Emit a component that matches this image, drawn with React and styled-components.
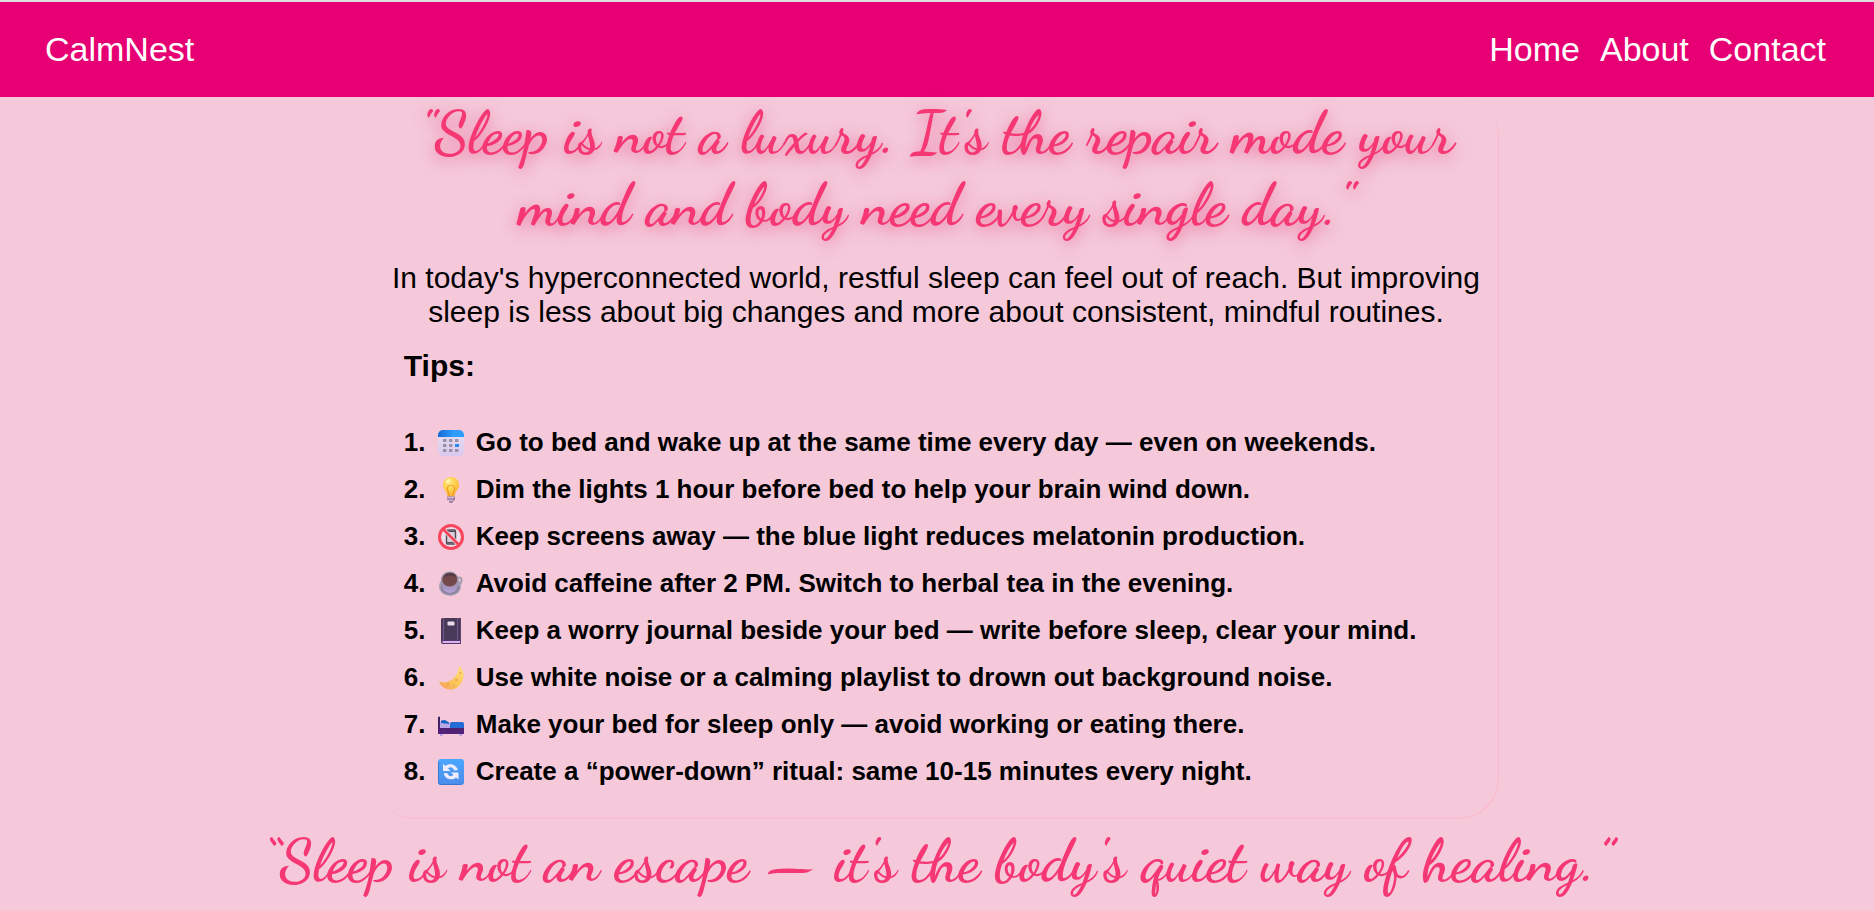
import React from "react";
import styled, { createGlobalStyle } from "styled-components";

const GlobalStyle = createGlobalStyle`
  *, *::before, *::after { box-sizing: border-box; }
  body {
    margin: 0;
    background: #f5c9da;
    color: #000;
    font-family: Arial, "Liberation Sans", sans-serif;
    overflow-x: hidden;
  }
`;

const Header = styled.header`
  display: flex;
  align-items: center;
  justify-content: space-between;
  min-height: 97px;
  padding: 0 48px 2px 45px;
  border-top: 2px solid #dedede;
  background: #e60073;
`;

const NavLink = styled.a`
  color: #fff;
  font-size: 34px;
  line-height: 40px;
  text-decoration: none;
`;

const Nav = styled.nav`
  display: flex;
  gap: 20px;
`;

const Main = styled.main`
  display: flex;
  flex-direction: column;
  align-items: center;
  gap: 6px;
`;

const Card = styled.section`
  width: 60%;
  padding: 0 17px 24px 15px;
  border-radius: 40px;
  box-shadow: inset -1px -1px 1px #fabacd;
`;

const Quote = styled.h1`
  margin: 0;
  color: #f53874;
  font-family: "Dancing Script", "Liberation Serif", cursive;
  font-size: 60px;
  font-weight: 700;
  line-height: 72px;
  text-align: center;
  text-shadow: ${(p) => (p.$glow ? "0 4px 15px rgba(232, 30, 100, 0.5)" : "none")};
`;

const Intro = styled.p`
  margin: 20px 0;
  font-size: 30px;
  line-height: 34px;
  text-align: center;
`;

const TipsTitle = styled.h2`
  margin: 0 0 36px;
  padding-left: 14px;
  font-size: 30px;
  line-height: 34px;
`;

const TipList = styled.ol`
  margin: 0;
  padding: 0 0 0 14px;
  list-style: none;
`;

const Tip = styled.li`
  display: flex;
  align-items: center;
  font-size: 26px;
  font-weight: 700;
  line-height: 47px;
`;

const TipNumber = styled.span`
  width: 34px;
`;

const TipIcon = styled.svg`
  flex: none;
  width: 26px;
  height: 26px;
  margin-right: 12px;
`;

const Calendar = () => (
  <TipIcon viewBox="0 0 26 26" aria-hidden="true">
    <defs>
      <linearGradient id="calTop"><stop stopColor="#1769d2" /><stop offset=".6" stopColor="#2f9dff" /></linearGradient>
      <linearGradient id="calBody" x2="0" y2="1"><stop stopColor="#e6e0f0" /><stop offset="1" stopColor="#dac9ef" /></linearGradient>
    </defs>
    <rect width="26" height="26" rx="5" fill="url(#calBody)" />
    <path d="M0 7V5a5 5 0 0 1 5-5h16a5 5 0 0 1 5 5v2z" fill="url(#calTop)" />
    <path
      d="M5 9h3.400v3H5zM11 9h3.400v3H11zM17 9h3.400v3H17zM5 14h3.400v3H5zM11 14h3.400v3H11zM5 19h3.400v3H5zM11 19h3.400v3H11zM17 19h3.400v3H17z"
      fill="#9b91a6"
    />
    <path d="M17 14h4v3h-4z" fill="#2a8cf0" />
  </TipIcon>
);

const Bulb = () => (
  <TipIcon viewBox="0 0 26 26" aria-hidden="true">
    <defs>
      <radialGradient id="bulb" cx=".4" cy=".3" r=".75"><stop stopColor="#ffe98a" /><stop offset=".5" stopColor="#ffd149" /><stop offset="1" stopColor="#f8a83c" /></radialGradient>
    </defs>
    <path d="M5 8a8 8 0 0 1 16 0c0 5-4 6-4.500 11.500h-7C9 14 5 13 5 8z" fill="url(#bulb)" />
    <path d="M11.500 19l-1.500-5c-2-4 1-6 3-6s5 2 3 6l-1.500 5" fill="none" stroke="#ef9b25" strokeWidth="1.200" />
    <ellipse cx="10" cy="4" rx="2.500" ry="1.500" fill="#fff3b5" transform="rotate(-35 10 4)" />
    <path d="M9 19.500h8v3l-1.500 1.500-1.500 2h-2l-1.500-2L9 22.500z" fill="#9a789f" />
    <path d="M9 21l7-.500M10 23.500l5-.500" stroke="#dfcfe6" strokeWidth="1" />
  </TipIcon>
);

const NoPhone = () => (
  <TipIcon viewBox="0 0 26 26" aria-hidden="true">
    <circle cx="13" cy="13" r="11.500" fill="#f0deea" />
    <rect x="8.500" y="6" width="9" height="14" rx="1" fill="#d6cedb" stroke="#514a56" strokeWidth="1.400" />
    <path d="M9 7.500h8M9 18.500h8" stroke="#514a56" strokeWidth="1.200" />
    <path d="M5 5l16 16" stroke="#f4dce7" strokeWidth="4" />
    <path d="M4.500 4.500l17 17" stroke="#f3425c" strokeWidth="2.600" />
    <circle cx="13" cy="13" r="11.500" fill="none" stroke="#fa465d" strokeWidth="3" />
  </TipIcon>
);

const Coffee = () => (
  <TipIcon viewBox="0 0 26 26" aria-hidden="true">
    <defs>
      <linearGradient id="cup" x2="0" y2="1"><stop stopColor="#8f869d" /><stop offset="1" stopColor="#b5a1d8" /></linearGradient>
    </defs>
    <ellipse cx="12" cy="15.500" rx="11" ry="9.500" fill="#aaa1ba" />
    <ellipse cx="12" cy="16" rx="9.500" ry="7.500" fill="#8b8099" />
    <path d="M19 8c2-3 5-1 4.500 2s-3 4-6 4.500" fill="none" stroke="#a59cb1" strokeWidth="2" />
    <path d="M3 8c0 9 3 14 9 14s8.500-5 8.500-14z" fill="url(#cup)" />
    <ellipse cx="11.700" cy="8" rx="8.800" ry="7.500" fill="#a098ad" />
    <ellipse cx="11.700" cy="9" rx="7.500" ry="6.500" fill="#75484b" />
    <path d="M5 7c1-7 13-7 14 0-3-3-11-3-14 0z" fill="#563b46" />
  </TipIcon>
);

const Notebook = () => (
  <TipIcon viewBox="0 0 26 26" aria-hidden="true">
    <path d="M4 0h19v26H5a2 2 0 0 1-2-2V1z" fill="#493a59" />
    <path d="M4.500 23H23v2.500H4.500z" fill="#d3b5e8" />
    <path d="M4 22h19v1H4zM4 25h19v1H4z" fill="#5b3278" />
    <path d="M5.500 0v22M19.500 0v22" stroke="#76558e" strokeWidth="1" />
    <path d="M22.500 0v25" stroke="#5e4470" strokeWidth="1" />
    <rect x="9.500" y="3.500" width="7" height="4" rx="1" fill="#e8dded" />
  </TipIcon>
);

const Moon = () => (
  <TipIcon viewBox="0 0 26 26" aria-hidden="true">
    <defs>
      <linearGradient id="moon" x1="1" x2="0" y2="1"><stop stopColor="#ffe181" /><stop offset=".5" stopColor="#fcc75b" /><stop offset="1" stopColor="#f5a15b" /></linearGradient>
    </defs>
    <path d="M21 1C25 4 26 8 25.500 12 24.500 19 19 24.500 12.500 24.500 7.500 24.500 2.500 21.500 1 16.500 5 18 10 17.500 14 14.500 18.500 11 20.500 6.500 21 1z" fill="url(#moon)" />
    <g fill="#eba94f">
      <ellipse cx="22.500" cy="8" rx="1" ry="1.300" />
      <ellipse cx="18.500" cy="15" rx="1.500" ry="1.200" />
      <circle cx="10" cy="19.500" r="1.300" />
      <circle cx="16" cy="21" r="1" />
    </g>
  </TipIcon>
);

const Bed = () => (
  <TipIcon viewBox="0 0 26 26" aria-hidden="true">
    <defs>
      <linearGradient id="frame" x2="0" y2="1"><stop stopColor="#37205c" /><stop offset="1" stopColor="#572179" /></linearGradient>
    </defs>
    <path d="M2 10h9l1.500 3v4H2z" fill="#b8a9e6" />
    <path d="M3 8.500l4-.500 4 2.500v1.500L3 11z" fill="#1765c0" />
    <path d="M12 11.500a2 2 0 0 1 2-1.500h10a2 2 0 0 1 2 2v5.500H12z" fill="#236cd5" />
    <path d="M0 5l2-.500V16h24v6H0z" fill="url(#frame)" />
    <path d="M2 22h2.500v2H2zM21.500 22H24v2h-2.500z" fill="#b49be6" />
  </TipIcon>
);

const Cycle = () => (
  <TipIcon viewBox="0 0 26 26" aria-hidden="true">
    <defs>
      <linearGradient id="cycle" x2="0" y2="1"><stop stopColor="#4aa7ff" /><stop offset="1" stopColor="#4c8bea" /></linearGradient>
    </defs>
    <rect width="26" height="26" rx="3" fill="url(#cycle)" />
    <path d="M.500 3v20a2.500 2.500 0 0 0 2.500 2.500h20" fill="none" stroke="#3878d4" strokeWidth="1" />
    <g fill="#f0ecff">
      <path d="M5 5l2.500 2C11 3.500 18 5 20 11l-3.500.500C14.500 8 12 7.500 10 9.500l2.500 2.500H5z" />
      <path d="M20.500 20.500l-2.500-2C14.500 22 7.500 20.500 5.500 14.500l3.500-.500c2 3.500 4.500 4 6.500 2L13 13.500h7.500z" />
    </g>
  </TipIcon>
);

const tips = [
  [Calendar, "Go to bed and wake up at the same time every day — even on weekends."],
  [Bulb, "Dim the lights 1 hour before bed to help your brain wind down."],
  [NoPhone, "Keep screens away — the blue light reduces melatonin production."],
  [Coffee, "Avoid caffeine after 2 PM. Switch to herbal tea in the evening."],
  [Notebook, "Keep a worry journal beside your bed — write before sleep, clear your mind."],
  [Moon, "Use white noise or a calming playlist to drown out background noise."],
  [Bed, "Make your bed for sleep only — avoid working or eating there."],
  [Cycle, "Create a “power-down” ritual: same 10-15 minutes every night."],
];

export default function App() {
  return (
    <>
      <GlobalStyle />
      <Header>
        <NavLink href="#">CalmNest</NavLink>
        <Nav>
          <NavLink href="#home">Home</NavLink>
          <NavLink href="#about">About</NavLink>
          <NavLink href="#contact">Contact</NavLink>
        </Nav>
      </Header>
      <Main>
        <Card>
          <Quote $glow>
            "Sleep is not a luxury. It's the repair mode your mind and body need every single day."
          </Quote>
          <Intro>
            In today's hyperconnected world, restful sleep can feel out of reach. But improving
            sleep is less about big changes and more about consistent, mindful routines.
          </Intro>
          <TipsTitle>Tips:</TipsTitle>
          <TipList>
            {tips.map(([Icon, text], i) => (
              <Tip key={text}>
                <TipNumber>{i + 1}.</TipNumber>
                <Icon />
                <span>{text}</span>
              </Tip>
            ))}
          </TipList>
        </Card>
        <Quote as="p">“Sleep is not an escape — it's the body's quiet way of healing.”</Quote>
      </Main>
    </>
  );
}
